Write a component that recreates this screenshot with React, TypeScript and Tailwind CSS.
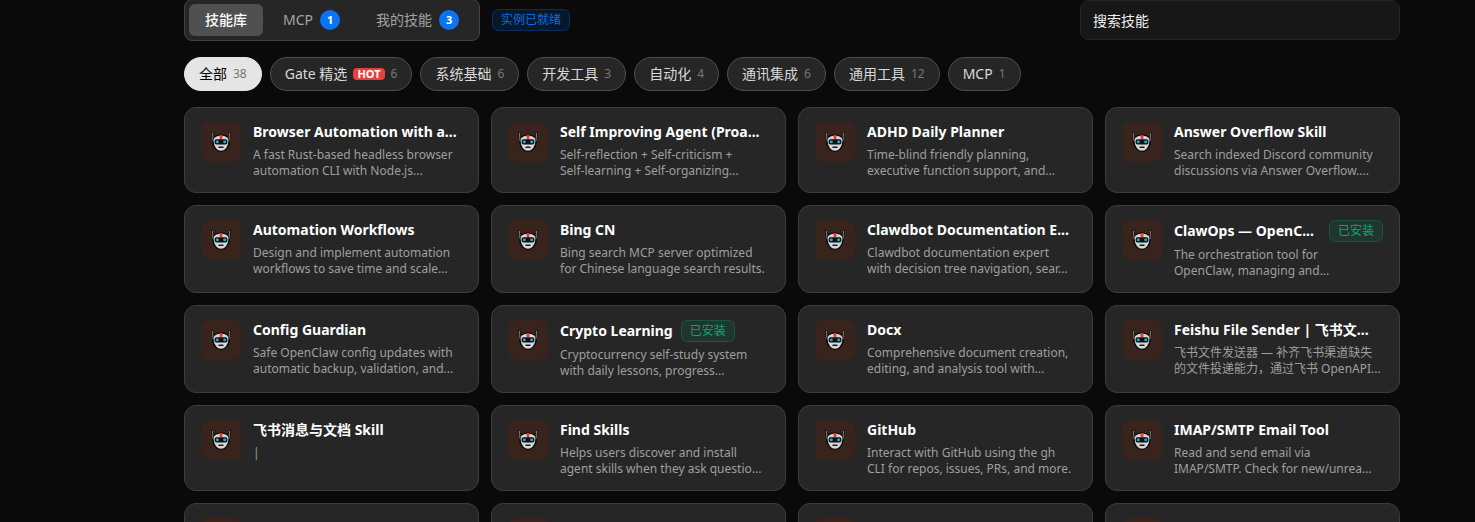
import { useState } from "react";
import clsx from "clsx";

type Skill = { name: string; description: string; installed?: boolean };

const tabs = [
  { label: "技能库" },
  { label: "MCP", count: 1 },
  { label: "我的技能", count: 3 },
];

const categories = [
  { label: "全部", count: 38 },
  { label: "Gate 精选", count: 6, hot: true },
  { label: "系统基础", count: 6 },
  { label: "开发工具", count: 3 },
  { label: "自动化", count: 4 },
  { label: "通讯集成", count: 6 },
  { label: "通用工具", count: 12 },
  { label: "MCP", count: 1 },
];

const skills: Skill[] = [
  { name: "Browser Automation with a...", description: "A fast Rust-based headless browser\nautomation CLI with Node.js..." },
  { name: "Self Improving Agent (Proa...", description: "Self-reflection + Self-criticism +\nSelf-learning + Self-organizing..." },
  { name: "ADHD Daily Planner", description: "Time-blind friendly planning,\nexecutive function support, and..." },
  { name: "Answer Overflow Skill", description: "Search indexed Discord community\ndiscussions via Answer Overflow...." },
  { name: "Automation Workflows", description: "Design and implement automation\nworkflows to save time and scale..." },
  { name: "Bing CN", description: "Bing search MCP server optimized\nfor Chinese language search results." },
  { name: "Clawdbot Documentation E...", description: "Clawdbot documentation expert\nwith decision tree navigation, sear..." },
  { name: "ClawOps — OpenC...", description: "The orchestration tool for\nOpenClaw, managing and...", installed: true },
  { name: "Config Guardian", description: "Safe OpenClaw config updates with\nautomatic backup, validation, and..." },
  { name: "Crypto Learning", description: "Cryptocurrency self-study system\nwith daily lessons, progress...", installed: true },
  { name: "Docx", description: "Comprehensive document creation,\nediting, and analysis tool with..." },
  { name: "Feishu File Sender | 飞书文...", description: "飞书文件发送器 — 补齐飞书渠道缺失\n的文件投递能力，通过飞书 OpenAPI..." },
  { name: "飞书消息与文档 Skill", description: "|" },
  { name: "Find Skills", description: "Helps users discover and install\nagent skills when they ask questio..." },
  { name: "GitHub", description: "Interact with GitHub using the gh\nCLI for repos, issues, PRs, and more." },
  { name: "IMAP/SMTP Email Tool", description: "Read and send email via\nIMAP/SMTP. Check for new/unrea..." },
];

function RobotIcon() {
  return (
    <svg viewBox="0 0 20 20" className="size-5" aria-hidden="true">
      <path d="M.4 0H2L3.2 4.2Q6 2.4 10 2.4T16.8 4.2L18 0h1.6L19 9.5Q18.6 14 16 17 13.5 20 10 20T4 17Q1.4 14 1 9.5Z" fill="#080808" />
      <path d="M1.5.8 2 9M18.5.8 18 9" stroke="#8f857c" strokeWidth="1" fill="none" />
      <path d="M3.2 6Q5.5 3.5 10 3.5T16.8 6L17.4 9.5Q17.2 13.5 15 16.2 13 18.8 10 18.8T5 16.2Q2.8 13.5 2.6 9.5Z" fill="#d6d6d6" />
      <path d="M8.4 3.5h3.2l-.3 3.7H8.7Z" fill="#ee3f26" />
      <rect x="3.6" y="7.3" width="12.8" height="5.2" rx="1.8" fill="#0b1116" />
      <rect x="4.8" y="8.6" width="3" height="2.6" rx="1.1" fill="#2aa9c8" />
      <rect x="12.2" y="8.6" width="3" height="2.6" rx="1.1" fill="#2aa9c8" />
      <rect x="7.4" y="14.6" width="5.2" height="1.5" rx=".7" fill="#1d1d1d" />
    </svg>
  );
}

function SkillCard({ skill }: { skill?: Skill }) {
  return (
    <article className="flex min-h-[86px] gap-3 rounded-xl border border-[#3d3d3d] bg-[#262626] px-4 pt-3.5 pb-[13px]">
      <div className="flex size-10 shrink-0 items-center justify-center rounded-lg bg-[#38231d]">
        <RobotIcon />
      </div>
      {skill && (
        <div className="flex min-w-0 flex-1 flex-col gap-[5px]">
          <div className="flex items-center gap-2">
            <h3
              className={clsx(
                "text-sm leading-5 font-bold whitespace-nowrap text-white",
                skill.name.endsWith("...") && "flex-1",
              )}
            >
              {skill.name}
            </h3>
            {skill.installed && (
              <span className="shrink-0 rounded-md border border-[#175443] bg-[#1f352e] px-2 text-xs leading-5 whitespace-nowrap text-[#15a277]">
                已安装
              </span>
            )}
          </div>
          <p className="text-xs leading-4 whitespace-pre text-[#9f9f9f]">{skill.description}</p>
        </div>
      )}
    </article>
  );
}

export default function App() {
  const [tab, setTab] = useState(0);
  const [category, setCategory] = useState(0);
  return (
    <div className="h-screen overflow-hidden bg-[#0a0a0a] pr-[75px] pl-[184px] font-['Noto_Sans','Noto_Sans_CJK_SC',sans-serif]">
      <main className="-mt-px flex flex-col gap-4">
        <header className="flex items-center justify-between">
          <div className="flex items-center gap-3">
            <nav className="flex gap-1 rounded-lg border border-[#424242] bg-[#262626] p-1">
              {tabs.map((t, i) => (
                <button
                  key={t.label}
                  type="button"
                  onClick={() => setTab(i)}
                  className={clsx(
                    "flex h-8 items-center gap-[7px] rounded-md px-4 text-sm whitespace-nowrap",
                    i === tab ? "bg-[#505050] font-medium text-white" : "text-[#a3a3a3]",
                  )}
                >
                  {t.label}
                  {t.count && (
                    <span className="flex size-5 items-center justify-center rounded-full bg-[#0a74f5] text-[11px] leading-4 font-bold text-white">
                      {t.count}
                    </span>
                  )}
                </button>
              ))}
            </nav>
            <span className="rounded-md border border-[#0b2e5c] bg-[#08182b] px-2 text-xs leading-5 whitespace-nowrap text-[#0d6de0]">
              实例已就绪
            </span>
          </div>
          <input
            type="search"
            aria-label="搜索技能"
            placeholder="搜索技能"
            className="h-10 w-80 rounded-lg border border-[#242424] bg-[#171717] px-3 text-sm text-white outline-none placeholder:text-[#f0f0f0]"
          />
        </header>
        <div className="flex gap-2">
          {categories.map((c, i) => (
            <button
              key={c.label}
              type="button"
              onClick={() => setCategory(i)}
              className={clsx(
                "flex h-[34px] items-center gap-1.5 rounded-full border px-3.5 text-sm whitespace-nowrap",
                i === category ? "border-[#e5e5e5] bg-[#e5e5e5] text-black" : "border-[#4d4d4d] bg-[#262626] text-[#d9d9d9]",
              )}
            >
              {c.label}
              {c.hot && (
                <span className="rounded-sm bg-[#e83f3f] px-1 text-[11px] leading-3 font-bold text-white">HOT</span>
              )}
              <span className="text-xs text-[#777777]">{c.count}</span>
            </button>
          ))}
        </div>
        <section className="grid grid-cols-4 gap-3">
          {skills.map((s) => (
            <SkillCard key={s.name} skill={s} />
          ))}
          {[0, 1, 2, 3].map((n) => (
            <SkillCard key={n} />
          ))}
        </section>
      </main>
    </div>
  );
}
